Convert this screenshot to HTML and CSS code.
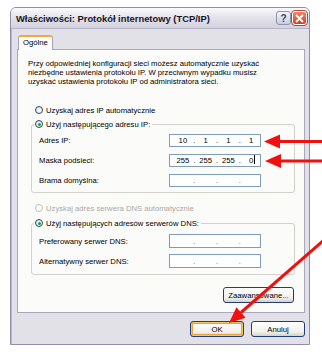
FILE: index.html
```html
<html>
<head>
    <title>Właściwości: Protokół internetowy (TCP/IP)</title>
<link rel="stylesheet" href="styles.css">
</head>
<body>
  <div class="window">
    <div class="titlebar">
      <span class="title">Właściwości: Protokół internetowy (TCP/IP)</span>
      <div class="caption-btns">
        <span class="cbtn help">?</span>
        <span class="cbtn close">
          <svg width="9" height="9" viewBox="0 0 9 9"><path d="M1 1 L8 8 M8 1 L1 8" stroke="#fff" stroke-width="1.8"/></svg>
        </span>
      </div>
    </div>
    <div class="client">
      <div class="tabs"><span class="tab">Ogólne</span></div>
      <div class="panel">
        <p class="intro">Przy odpowiedniej konfiguracji sieci możesz automatycznie uzyskać niezbędne ustawienia protokołu IP. W przeciwnym wypadku musisz uzyskać ustawienia protokołu IP od administratora sieci.</p>

        <div class="radio-row first"><span class="radio"></span>Uzyskaj adres IP automatycznie</div>

        <fieldset class="group ip-group">
          <legend><span class="radio on"></span>Użyj następującego adresu IP:</legend>
          <div class="field-row">
            <span class="lbl">Adres IP:</span>
            <div class="ipbox"><span class="seg">10</span><span class="dot">.</span><span class="seg">1</span><span class="dot">.</span><span class="seg">1</span><span class="dot">.</span><span class="seg">1</span></div>
          </div>
          <div class="field-row">
            <span class="lbl">Maska podsieci:</span>
            <div class="ipbox"><span class="seg">255</span><span class="dot">.</span><span class="seg">255</span><span class="dot">.</span><span class="seg">255</span><span class="dot">.</span><span class="seg">0<i class="caret"></i></span></div>
          </div>
          <div class="field-row">
            <span class="lbl">Brama domyślna:</span>
            <div class="ipbox empty"><span class="seg"></span><span class="dot">.</span><span class="seg"></span><span class="dot">.</span><span class="seg"></span><span class="dot">.</span><span class="seg"></span></div>
          </div>
        </fieldset>

        <div class="radio-row disabled"><span class="radio off"></span>Uzyskaj adres serwera DNS automatycznie</div>

        <fieldset class="group dns-group">
          <legend><span class="radio on"></span>Użyj następujących adresów serwerów DNS:</legend>
          <div class="field-row">
            <span class="lbl">Preferowany serwer DNS:</span>
            <div class="ipbox empty"><span class="seg"></span><span class="dot">.</span><span class="seg"></span><span class="dot">.</span><span class="seg"></span><span class="dot">.</span><span class="seg"></span></div>
          </div>
          <div class="field-row">
            <span class="lbl">Alternatywny serwer DNS:</span>
            <div class="ipbox empty"><span class="seg"></span><span class="dot">.</span><span class="seg"></span><span class="dot">.</span><span class="seg"></span><span class="dot">.</span><span class="seg"></span></div>
          </div>
        </fieldset>

        <div class="adv-row"><button class="xpbtn adv">Zaawansowane...</button></div>
      </div>
      <div class="dlg-btns">
        <button class="xpbtn ok">OK</button>
        <button class="xpbtn">Anuluj</button>
      </div>
    </div>
  </div>

  <!-- strzałki nałożone na zrzut -->
  <svg class="arrows" width="322" height="356" viewBox="0 0 322 356">
    <line x1="323" y1="141.5" x2="278" y2="141.5" stroke="#f01010" stroke-width="3"/>
    <polygon points="264,141.5 280,134.5 280,148.5" fill="#f01010"/>
    <line x1="323" y1="161" x2="279" y2="161" stroke="#f01010" stroke-width="3"/>
    <polygon points="265,161 281,154 281,168" fill="#f01010"/>
    <line x1="324" y1="240" x2="241" y2="312.5" stroke="#f01010" stroke-width="3"/>
    <polygon points="229,323 245.6,317.7 236.4,307.2" fill="#f01010"/>
  </svg>
</body>
</html>
```

FILE: styles.css
```css
body {
  margin: 0;
  background-color: #FFF;
  font-family: "Liberation Sans", Arial, sans-serif;
  font-size: 7.7px;
  color: #000;
  position: relative;
  width: 322px;
  height: 356px;
  overflow: hidden;
}

.window {
  margin: 7px 0 0 10px;
  width: 300px;
  height: 338px;
  box-sizing: border-box;
  border: 1px solid #8F8EA8;
  border-radius: 6px 6px 0 0;
  background-color: #E2E1E8;
  display: flex;
  flex-direction: column;
}

.titlebar {
  height: 20px;
  display: flex;
  align-items: center;
  justify-content: space-between;
  padding: 0 2px 0 5px;
  border-radius: 5px 5px 0 0;
  background: linear-gradient(#FBFBFD, #E4E3EB 45%, #D3D2DE);
  border-bottom: 1px solid #B6B5C8;
}

.title {
  font-weight: bold;
  font-size: 9.4px;
  color: #15151F;
}

.caption-btns {
  display: flex;
  gap: 1px;
}

.cbtn {
  width: 15px;
  height: 14px;
  border-radius: 3px;
  display: flex;
  align-items: center;
  justify-content: center;
  box-sizing: border-box;
}

.help {
  background: linear-gradient(#F4F5FA, #C9CEDF);
  border: 1px solid #8E93AE;
  font-weight: bold;
  font-size: 10px;
  color: #3A3F5C;
}

.close {
  background: linear-gradient(#F08466, #D9401F);
  border: 1px solid #FFF;
  outline: 1px solid #B04A3A;
}

.client {
  flex: 1;
  display: flex;
  flex-direction: column;
  padding: 5px 4px 0 5px;
  border-left: 1px solid #B7B6CB;
}

.tabs {
  display: flex;
  height: 15px;
  padding-left: 1px;
}

.tab {
  width: 35px;
  box-sizing: border-box;
  background-color: #FCFCFE;
  border: 1px solid #A6A5B8;
  border-top: 2px solid #F2A93A;
  border-bottom: none;
  border-radius: 3px 3px 0 0;
  text-align: center;
  line-height: 12px;
  position: relative;
  top: 1px;
}

.panel {
  width: 288px;
  box-sizing: border-box;
  background-color: #FBFBFA;
  border: 1px solid #A9A8BA;
  padding: 9px 10px 9px 10px;
}

.intro {
  margin: 0;
  line-height: 9px;
  width: 245px;
}

.radio-row {
  display: flex;
  align-items: center;
  height: 12px;
  margin-left: 7px;
}

.radio-row.first {
  margin-top: 18px;
}

.radio-row.disabled {
  margin-top: 9px;
  color: #ACA8A0;
}

.radio {
  width: 8px;
  height: 8px;
  box-sizing: border-box;
  border: 1px solid #1F4E7E;
  border-radius: 50%;
  background: radial-gradient(circle at 60% 60%, #FFF, #DCDAD0);
  margin-right: 3px;
  display: inline-flex;
  align-items: center;
  justify-content: center;
}

.radio.on::after {
  content: "";
  width: 3px;
  height: 3px;
  border-radius: 50%;
  background-color: #21A121;
}

.radio.off {
  border-color: #C4C2B8;
  background: #FBFBFA;
}

.group {
  margin: 2px 0 0 3px;
  width: 264px;
  box-sizing: border-box;
  border: 1px solid #D3D2C8;
  border-radius: 3px;
  padding: 4px 0 5px 7px;
}

.dns-group {
  margin-top: 3px;
  padding: 5px 0 6px 7px;
}

.group legend {
  display: flex;
  align-items: center;
  height: 12px;
  padding: 0 2px 0 1px;
  margin-left: -5px;
}

.field-row {
  display: flex;
  align-items: center;
  height: 13px;
}

.field-row + .field-row {
  margin-top: 7px;
}

.dns-group .field-row {
  height: 14px;
}

.dns-group .field-row + .field-row {
  margin-top: 6px;
}

.lbl {
  width: 130px;
}

.ipbox {
  width: 92px;
  height: 100%;
  box-sizing: border-box;
  border: 1px solid #7F9DB9;
  background-color: #FFF;
  display: flex;
  align-items: center;
  padding-left: 4px;
}

.seg {
  width: 18px;
  text-align: center;
  position: relative;
}

.dot {
  width: 5px;
  text-align: center;
}

.empty .dot {
  color: #8A3A8A;
}

.caret {
  position: absolute;
  top: -1px;
  margin-left: 1px;
  width: 1px;
  height: 9px;
  background-color: #000;
}

.adv-row {
  display: flex;
  justify-content: flex-end;
  margin-top: 12px;
}

.xpbtn {
  font-family: "Liberation Sans", Arial, sans-serif;
  font-size: 7.7px;
  color: #000;
  height: 16px;
  padding: 0;
  border: 1px solid #1F3F76;
  border-radius: 3px;
  background: linear-gradient(#FFFFFF, #F2F1EC 70%, #D6D0C5);
}

.adv {
  width: 71px;
}

.dlg-btns {
  display: flex;
  justify-content: flex-end;
  gap: 7px;
  margin-top: 8px;
  width: 288px;
}

.dlg-btns .xpbtn {
  width: 54px;
}

.xpbtn.ok {
  box-shadow: inset 0 0 0 1px #F7C561, inset 0 0 0 2px #E8A33A;
}

.arrows {
  position: absolute;
  top: 0;
  left: 0;
  pointer-events: none;
}
```
